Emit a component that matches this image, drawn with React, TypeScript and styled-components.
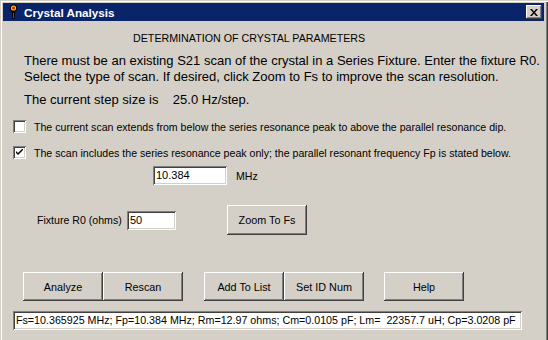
import styled, { createGlobalStyle } from 'styled-components';

const GlobalStyle = createGlobalStyle`
  html, body {
    margin: 0;
    padding: 0;
    background: #d4d0c8;
  }
  body {
    font-family: "Liberation Sans", Arial, sans-serif;
    color: #000;
  }
`;

const Window = styled.div`
  width: 548px;
  height: 340px;
  box-sizing: border-box;
  padding: 3px 4px 0 3px;
  background: #d4d0c8;
  box-shadow: inset 1px 1px #d4d0c8, inset 2px 2px #fff, inset -1px 0 #404040, inset -2px 0 #808080;
  overflow: hidden;
  display: flex;
  flex-direction: column;
`;

const TitleBar = styled.div`
  height: 18px;
  background: #0a246a;
  display: flex;
  align-items: center;
  padding-left: 6px;
`;

const TitleText = styled.span`
  margin-left: 6px;
  color: #fff;
  font-weight: bold;
  font-size: 11.7px;
  flex: 1;
`;

const CloseButton = styled.div`
  width: 16px;
  height: 14px;
  margin-right: 2px;
  background: #d4d0c8;
  box-shadow: inset -1px -1px #404040, inset 1px 1px #fff, inset -2px -2px #808080;
  display: flex;
  align-items: center;
  justify-content: center;
`;

const Content = styled.div`
  display: flex;
  flex-direction: column;
`;

const Heading = styled.div`
  margin: 10px 0 0 130px;
  font-size: 10.7px;
  line-height: 14px;
`;

const Paragraph = styled.div<{ $top: number }>`
  margin: ${(p) => p.$top}px 0 0 21px;
  font-size: 13px;
  line-height: 16px;
  white-space: pre;
`;

const CheckRow = styled.label<{ $top: number }>`
  margin: ${(p) => p.$top}px 0 0 10px;
  display: flex;
  align-items: center;
  gap: 8px;
  height: 13px;
  font-size: 10.6px;
`;

const CheckBox = styled.span`
  width: 13px;
  height: 13px;
  box-sizing: border-box;
  background: #fff;
  box-shadow: inset 1px 1px #808080, inset -1px -1px #fff, inset 2px 2px #404040, inset -2px -2px #d4d0c8;
  display: flex;
  align-items: center;
  justify-content: center;
`;

const FieldRow = styled.div<{ $top: number; $indent: number; $height: number }>`
  margin: ${(p) => p.$top}px 0 0 ${(p) => p.$indent}px;
  height: ${(p) => p.$height}px;
  display: flex;
  align-items: center;
`;

const Label = styled.span<{ $width?: number }>`
  font-size: 10.6px;
  width: ${(p) => (p.$width ? `${p.$width}px` : 'auto')};
`;

const TextBox = styled.div<{ $width: number; $gap?: number; $size?: number }>`
  width: ${(p) => p.$width}px;
  height: 19px;
  box-sizing: border-box;
  padding: 0 0 0 3px;
  margin-right: ${(p) => p.$gap ?? 0}px;
  background: #fff;
  box-shadow: inset 1px 1px #808080, inset -1px -1px #fff, inset 2px 2px #404040, inset -2px -2px #d4d0c8;
  font-size: ${(p) => p.$size ?? 11}px;
  line-height: 19px;
  white-space: pre;
  overflow: hidden;
`;

const Button = styled.div<{ $height?: number }>`
  width: 80px;
  height: ${(p) => p.$height ?? 29}px;
  box-sizing: border-box;
  background: #d4d0c8;
  box-shadow: inset -1px -1px #404040, inset 1px 1px #fff, inset -2px -2px #808080;
  display: flex;
  align-items: center;
  justify-content: center;
  font-size: 10.8px;
`;

const ButtonGroup = styled.div<{ $gap: number }>`
  display: flex;
  margin-right: ${(p) => p.$gap}px;
`;

const TorchIcon = () => (
  <svg width="9" height="16" viewBox="0 0 9 16">
    <path d="M2 5 L7 5 L6 10 L5.5 15 L3.5 15 L3 10 Z" fill="#000" />
    <rect x="4" y="9" width="1" height="5" fill="#555" />
    <circle cx="4.5" cy="4" r="3.6" fill="#000" />
    <circle cx="4.5" cy="4" r="2.6" fill="#f7d000" />
    <circle cx="4.5" cy="4" r="1.5" fill="#e01010" />
  </svg>
);

const CloseGlyph = () => (
  <svg width="8" height="7" viewBox="0 0 8 7">
    <path d="M0 0 L2 0 L4 2.5 L6 0 L8 0 L5 3.5 L8 7 L6 7 L4 4.5 L2 7 L0 7 L3 3.5 Z" fill="#000" />
  </svg>
);

const CheckGlyph = () => (
  <svg width="7" height="7" viewBox="0 0 7 7">
    <path d="M0 2 L0 4 L2 6 L7 1 L7 -1 L2 4 Z" fill="#000" />
  </svg>
);

const App = () => {
  return (
    <Window>
      <GlobalStyle />
      <TitleBar>
        <TorchIcon />
        <TitleText>Crystal Analysis</TitleText>
        <CloseButton>
          <CloseGlyph />
        </CloseButton>
      </TitleBar>

      <Content>
        <Heading>DETERMINATION OF CRYSTAL PARAMETERS</Heading>
        <Paragraph $top={8}>
          There must be an existing S21 scan of the crystal in a Series Fixture. Enter the fixture R0.
          {'\n'}Select the type of scan. If desired, click Zoom to Fs to improve the scan resolution.
        </Paragraph>
        <Paragraph $top={7}>{'The current step size is    25.0 Hz/step.'}</Paragraph>

        <CheckRow $top={12}>
          <CheckBox />
          The current scan extends from below the series resonance peak to above the parallel resonance dip.
        </CheckRow>
        <CheckRow $top={13}>
          <CheckBox>
            <CheckGlyph />
          </CheckBox>
          The scan includes the series resonance peak only; the parallel resonant frequency Fp is stated below.
        </CheckRow>

        <FieldRow $top={7} $indent={150} $height={19}>
          <TextBox $width={74} $gap={9}>10.384</TextBox>
          <Label>MHz</Label>
        </FieldRow>

        <FieldRow $top={20} $indent={34} $height={30}>
          <Label $width={90}>Fixture R0 (ohms)</Label>
          <TextBox $width={49} $gap={51}>50</TextBox>
          <Button $height={30}>Zoom To Fs</Button>
        </FieldRow>

        <FieldRow $top={37} $indent={20} $height={29}>
          <ButtonGroup $gap={21}>
            <Button>Analyze</Button>
            <Button>Rescan</Button>
          </ButtonGroup>
          <ButtonGroup $gap={20}>
            <Button>Add To List</Button>
            <Button>Set ID Num</Button>
          </ButtonGroup>
          <Button>Help</Button>
        </FieldRow>

        <FieldRow $top={10} $indent={10} $height={19}>
          <TextBox $width={509} $size={10.7}>
            {'Fs=10.365925 MHz; Fp=10.384 MHz; Rm=12.97 ohms; Cm=0.0105 pF; Lm=  22357.7 uH; Cp=3.0208 pF'}
          </TextBox>
        </FieldRow>
      </Content>
    </Window>
  );
};

export default App;
